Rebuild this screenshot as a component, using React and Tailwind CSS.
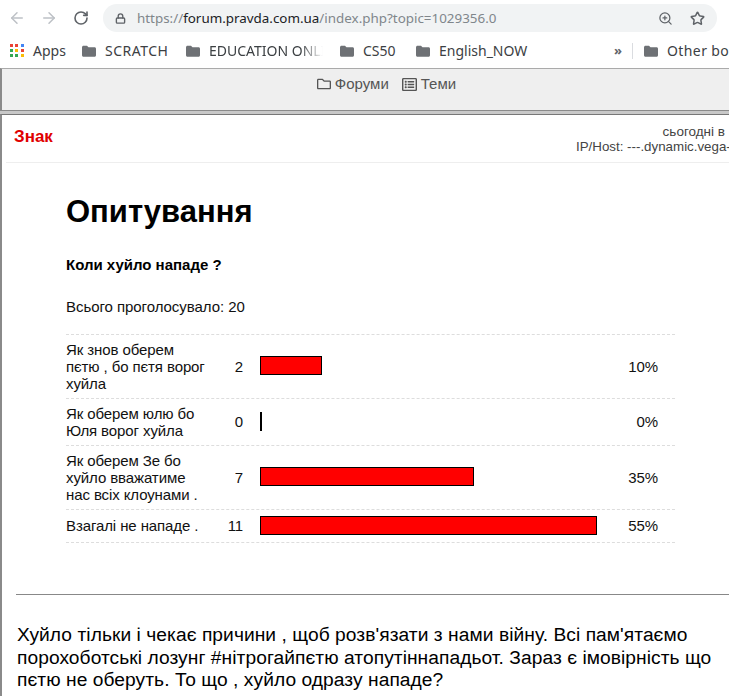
import React from 'react';
import { ArrowLeft, ArrowRight, RotateCw, Lock, ZoomIn, Star } from 'lucide-react';
import { FaRegFolder, FaRegListAlt } from 'react-icons/fa';

const poll = [
  { label: ['Як знов оберем', 'пєтю , бо пєтя ворог', 'хуйла'], votes: 2, width: 'w-[62px]', pct: '10%' },
  { label: ['Як оберем юлю бо', 'Юля ворог хуйла'], votes: 0, width: 'w-[2px]', pct: '0%' },
  { label: ['Як оберем Зе бо', 'хуйло вважатиме', 'нас всіх клоунами .'], votes: 7, width: 'w-[214px]', pct: '35%' },
  { label: ['Взагалі не нападе .'], votes: 11, width: 'w-[337px]', pct: '55%' },
];

const BookmarkFolder = () => (
  <svg width="16" height="16" viewBox="0 0 16 16" className="shrink-0">
    <path d="M1 4.5C1 3.4 1.7 2.8 2.6 2.8H6l1.5 1.5h6c.9 0 1.5.6 1.5 1.5v6.4c0 .9-.6 1.5-1.5 1.5h-11C1.7 13.7 1 13.1 1 12.2z" fill="#6e7175" />
  </svg>
);

const AppsIcon = () => {
  const colors = ['#ea4335', '#ea4335', '#4285f4', '#34a853', '#fbbc05', '#ea4335', '#34a853', '#34a853', '#fbbc05'];
  return (
    <div className="grid grid-cols-3 gap-[2px] w-[14px] shrink-0">
      {colors.map((c, i) => (
        <span key={i} className="w-[3px] h-[3px] block" style={{ backgroundColor: c }} />
      ))}
    </div>
  );
};

const Toolbar = () => (
  <div className="h-[36px] flex items-center bg-white">
    <ArrowLeft size={18} strokeWidth={2} className="ml-[8px] text-[#bdc1c6]" />
    <ArrowRight size={18} strokeWidth={2} className="ml-[14px] text-[#bdc1c6]" />
    <RotateCw size={16} strokeWidth={2.4} className="ml-[15px] text-[#5f6368]" />
    <div className="ml-[14px] w-[614px] h-[28px] rounded-full bg-[#f1f3f4] flex items-center">
      <Lock size={11} strokeWidth={3} className="ml-[12px] text-[#5f6368]" />
      <div className="ml-[11px] text-[13.4px] text-[#80868b] font-['Noto_Sans',sans-serif] whitespace-nowrap">
        https://<span className="text-[#202124]">forum.pravda.com.ua</span>/index.php?topic=1029356.0
      </div>
      <ZoomIn size={15} strokeWidth={2} className="ml-auto text-[#5f6368]" />
      <Star size={15} strokeWidth={2.4} className="ml-[17px] mr-[12px] text-[#5f6368]" />
    </div>
  </div>
);

const Bookmarks = () => (
  <div className="h-[32px] pb-[3px] flex items-center bg-white text-[14px] text-[#3c4043] font-['Noto_Sans',sans-serif] whitespace-nowrap overflow-hidden">
    <div className="ml-[10px] shrink-0"><AppsIcon /></div>
    <span className="ml-[9px] w-[48px] shrink-0">Apps</span>
    <BookmarkFolder />
    <span className="ml-[8px] w-[80px] shrink-0 tracking-[0.5px]">SCRATCH</span>
    <BookmarkFolder />
    <span className="ml-[8px] w-[114px] shrink-0 overflow-hidden [mask-image:linear-gradient(to_right,black_80%,transparent)]">EDUCATION ONLINE</span>
    <div className="ml-[16px] shrink-0"><BookmarkFolder /></div>
    <span className="ml-[8px] w-[52px] shrink-0">CS50</span>
    <BookmarkFolder />
    <span className="ml-[8px] w-[175px] shrink-0">English_NOW</span>
    <span className="text-[13px] font-bold text-[#5f6368] w-[18px] shrink-0">»</span>
    <div className="w-px h-[16px] bg-[#dadce0] shrink-0" />
    <div className="ml-[10px] shrink-0"><BookmarkFolder /></div>
    <span className="ml-[8px] shrink-0 tracking-[0.4px]">Other bookmarks</span>
  </div>
);

const ForumNav = () => (
  <div className="h-[43px] bg-[#efefef] border-t border-t-[#aaaaaa] border-b border-b-[#8a8a8a] border-l-2 border-l-[#8a8a8a] flex justify-center pt-[6px] pl-[42px] text-[15px] text-[#555555] font-['Liberation_Sans',sans-serif]">
    <div className="flex items-center h-[18px]">
      <FaRegFolder size={14} className="mr-[4px]" />
      <span>Форуми</span>
      <FaRegListAlt size={15} className="ml-[13px] mr-[4px]" />
      <span>Теми</span>
    </div>
  </div>
);

const PollTable = () => (
  <div className="w-[609px] border-t border-dashed border-t-[#dddddd] text-[15px] leading-[17px] tracking-[-0.1px] text-[#111111]">
    {poll.map((row) => (
      <div key={row.pct} className="flex items-center py-[6px] border-b border-dashed border-b-[#dddddd] min-h-[33px]">
        <div className={`w-[150px] ${row.label.length === 1 ? 'mb-[1px]' : ''}`}>
          {row.label.map((line) => (
            <div key={line} className="whitespace-nowrap">{line}</div>
          ))}
        </div>
        <div className="w-[27px] mb-[1px] text-right">{row.votes}</div>
        <div className={`ml-[17px] w-[364px] ${row.label.length === 3 ? 'mb-[2px]' : 'mb-[1px]'}`}>
          <div className={`h-[19px] bg-[#ff0000] border border-black ${row.width}`} />
        </div>
        <div className="w-[34px] mb-[1px] text-right">{row.pct}</div>
      </div>
    ))}
  </div>
);

export default function App() {
  return (
    <div className="w-[729px] h-[696px] overflow-hidden bg-white font-['Liberation_Sans',sans-serif]">
      <Toolbar />
      <Bookmarks />
      <ForumNav />
      <div className="h-[3px] bg-[#c8c8c8]" />
      <div className="h-[582px] border-t border-t-[#777777] border-l-2 border-l-[#8a8a8a]">
        <div className="ml-[4px] h-[48px] border-b border-b-[#eeeeee] flex">
          <div className="ml-[8px] mt-[12px] text-[17px] leading-[20px] font-bold text-[#e00000]">Знак</div>
          <div className="ml-auto mt-[9px] w-[153px] shrink-0 text-[13.33px] leading-[15px] text-[#444444] whitespace-nowrap overflow-hidden">
            <div className="text-right pr-[4px] text-[13.5px]">сьогодні в</div>
            <div>IP/Host: ---.dynamic.vega-ua.net</div>
          </div>
        </div>
        <div className="pl-[64px]">
          <h1 className="mt-[30px] text-[31px] leading-[37px] font-bold text-black">Опитування</h1>
          <p className="mt-[26px] text-[15px] leading-[17px] font-bold text-black">Коли хуйло нападе ?</p>
          <p className="mt-[25px] mb-[19px] text-[15px] leading-[17px] tracking-[-0.05px] text-[#111111]">Всього проголосувало: 20</p>
          <PollTable />
        </div>
        <div className="ml-[14px] mt-[51px] border-t border-t-[#888888]" />
        <p className="ml-[15px] mt-[29px] w-[708px] text-[19.2px] leading-[22.5px] tracking-[0.06px] text-black">
          Хуйло тільки і чекає причини , щоб розв'язати з нами війну. Всі пам'ятаємо порохоботські лозунг #нітрогайпєтю атопутіннападьот. Зараз є імовірність що пєтю не оберуть. То що , хуйло одразу нападе?
        </p>
      </div>
    </div>
  );
}
